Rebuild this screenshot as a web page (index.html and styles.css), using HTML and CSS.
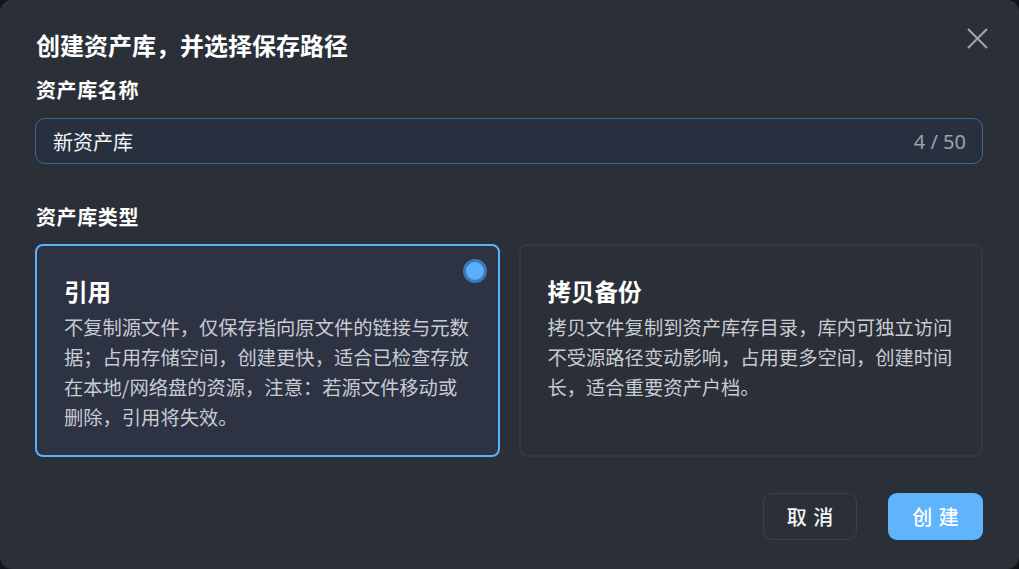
FILE: index.html
```html
<!DOCTYPE html>
<html lang="zh-CN">
<head>
<meta charset="utf-8">
<title>创建资产库</title>
<link rel="stylesheet" href="styles.css">
</head>
<body>
<div class="dialog">
  <div class="header">
    <h1 class="title">创建资产库，并选择保存路径</h1>
    <button class="close" aria-label="关闭">
      <svg width="21" height="21" viewBox="0 0 21 21"><path d="M1 1 L20 20 M20 1 L1 20" stroke="#a3a7ad" stroke-width="2" fill="none"/></svg>
    </button>
  </div>
  <div class="label label-name">资产库名称</div>
  <div class="input">
    <span class="input-text">新资产库</span>
    <span class="counter">4 / 50</span>
  </div>
  <div class="label label-type">资产库类型</div>
  <div class="cards">
    <div class="card selected">
      <span class="radio"></span>
      <div class="card-title">引用</div>
      <div class="card-desc">不复制源文件，仅保存指向原文件的链接与元数据；占用存储空间，创建更快，适合已检查存放在本地/网络盘的资源，注意：若源文件移动或删除，引用将失效。</div>
    </div>
    <div class="card">
      <div class="card-title">拷贝备份</div>
      <div class="card-desc">拷贝文件复制到资产库存目录，库内可独立访问不受源路径变动影响，占用更多空间，创建时间长，适合重要资产户档。</div>
    </div>
  </div>
  <div class="actions">
    <button class="btn btn-cancel">取 消</button>
    <button class="btn btn-primary">创 建</button>
  </div>
</div>
</body>
</html>
```

FILE: styles.css
```css
* { box-sizing: border-box; }
html, body {
  margin: 0;
  padding: 0;
  background: #121417;
  width: 1019px;
  height: 569px;
  overflow: hidden;
}
body {
  font-family: "Noto Sans CJK SC", "Noto Sans", sans-serif;
  color: #ffffff;
}
.dialog {
  width: 1019px;
  height: 569px;
  background: #2b3038;
  border-radius: 12px;
  padding: 28px 36px 0 35px;
  display: flex;
  flex-direction: column;
}
.header {
  display: flex;
  justify-content: space-between;
  align-items: flex-start;
}
.title {
  margin: 0 0 0 1px;
  font-size: 24px;
  line-height: 34px;
  font-weight: 700;
  color: #ffffff;
}
.close {
  margin: 0 -5px 0 0;
  padding: 0;
  border: none;
  background: transparent;
  width: 21px;
  height: 21px;
  display: block;
  cursor: pointer;
}
.close svg { display: block; }
.label {
  font-size: 20px;
  line-height: 28px;
  font-weight: 700;
  color: #ffffff;
  margin-left: 1px;
  letter-spacing: 0.6px;
}
.label-name { margin-top: 14px; }
.label-type { margin-top: 39px; }
.input {
  margin-top: 14px;
  height: 46px;
  border: 1px solid #3d6b8f;
  border-radius: 10px;
  background: #283040;
  display: flex;
  align-items: center;
  justify-content: space-between;
  padding: 0 16px 0 17px;
}
.input-text {
  font-size: 20px;
  color: #f4f6f8;
}
.counter {
  font-size: 20px;
  color: #9ca2aa;
  font-family: "Noto Sans", sans-serif;
}
.cards {
  margin-top: 13px;
  display: grid;
  grid-template-columns: 1fr 1fr;
  gap: 19px;
}
.card {
  position: relative;
  height: 213px;
  border: 2px solid #343941;
  border-radius: 8px;
  background: #2b3038;
  padding: 29px 26px 0 27px;
}
.card.selected {
  border-color: #5cb2fb;
  background: #2e3344;
}
.radio {
  position: absolute;
  top: 13px;
  right: 11px;
  width: 24px;
  height: 24px;
  border-radius: 50%;
  background: #5aaefc;
  border: 3px solid #3f78b6;
}
.card-title {
  font-size: 23.5px;
  line-height: 32px;
  font-weight: 700;
  color: #ffffff;
}
.card-desc {
  margin-top: 5px;
  font-size: 19.3px;
  line-height: 30px;
  color: #c8ccd2;
}
.actions {
  margin-top: 36px;
  display: flex;
  justify-content: flex-end;
  gap: 31px;
}
.btn {
  height: 47px;
  border-radius: 9px;
  font-family: "Noto Sans CJK SC", "Noto Sans", sans-serif;
  font-size: 20px;
  line-height: 1;
  padding: 0;
  letter-spacing: 1px;
  text-indent: 1px;
  font-weight: 500;
  cursor: pointer;
}
.btn-cancel {
  width: 94px;
  background: transparent;
  border: 1px solid #3b4049;
  color: #f2f4f6;
}
.btn-primary {
  width: 95px;
  background: #5fb4fb;
  border: none;
  color: #ffffff;
}
```
